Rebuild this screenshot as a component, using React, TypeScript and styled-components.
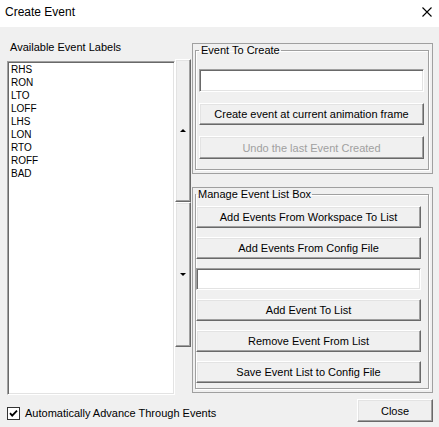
import styled, { createGlobalStyle, css } from 'styled-components';

const EVENT_LABELS = ['RHS', 'RON', 'LTO', 'LOFF', 'LHS', 'LON', 'RTO', 'ROFF', 'BAD'];

const GlobalStyle = createGlobalStyle`
  html, body {
    margin: 0;
    padding: 0;
    background: #f0f0f0;
  }
  body {
    font-family: "Liberation Sans", Arial, sans-serif;
    font-size: 11px;
    color: #000;
  }
`;

function App() {
  return (
    <Window>
      <GlobalStyle />
      <TitleBar>
        <Title>Create Event</Title>
        <svg width="10" height="10" viewBox="0 0 10 10">
          <path d="M0.5 0.5 L9.5 9.5 M9.5 0.5 L0.5 9.5" stroke="#000" strokeWidth="1.1" />
        </svg>
      </TitleBar>
      <Main>
        <LeftCol>
          <Caption>Available Event Labels</Caption>
          <ListBox>
            {EVENT_LABELS.map((label) => (
              <ListItem key={label}>{label}</ListItem>
            ))}
          </ListBox>
        </LeftCol>
        <ScrollCol>
          <ArrowButton $height={143}>
            <Arrow $dir="up" />
          </ArrowButton>
          <ArrowButton $height={145}>
            <Arrow $dir="down" />
          </ArrowButton>
        </ScrollCol>
        <RightCol>
          <Panel $height={131}>
            <GroupBox $pad="12px 4px 10px 3px" $gap={11}>
              <Legend>Event To Create</Legend>
              <TextBox $height={23} />
              <Button $height={23}>Create event at current animation frame</Button>
              <Button $height={23} disabled>Undo the last Event Created</Button>
            </GroupBox>
          </Panel>
          <Panel $height={206}>
            <GroupBox $pad="5px 7px 5px 0" $gap={9}>
              <Legend>Manage Event List Box</Legend>
              <Button $height={22}>Add Events From Workspace To List</Button>
              <Button $height={22}>Add Events From Config File</Button>
              <TextBox $height={22} />
              <Button $height={22}>Add Event To List</Button>
              <Button $height={22}>Remove Event From List</Button>
              <Button $height={22}>Save Event List to Config File</Button>
            </GroupBox>
          </Panel>
        </RightCol>
      </Main>
      <Footer>
        <CheckRow>
          <svg width="13" height="13" viewBox="0 0 13 13">
            <rect x="0.5" y="0.5" width="12" height="12" fill="#fff" stroke="#333" />
            <path d="M3 6.2 L5.2 8.6 L10 3.6" fill="none" stroke="#000" strokeWidth="1.8" />
          </svg>
          <span>Automatically Advance Through Events</span>
        </CheckRow>
        <CloseButton>Close</CloseButton>
      </Footer>
    </Window>
  );
}

export default App;

const raised = css`
  box-sizing: border-box;
  background: #f0f0f0;
  border: 1px solid;
  border-color: #fff #696969 #696969 #fff;
  box-shadow: inset -1px -1px 0 #a0a0a0, inset 1px 1px 0 #e3e3e3;
`;

const sunken = css`
  box-sizing: border-box;
  background: #fff;
  border: 1px solid;
  border-color: #a0a0a0 #fff #fff #a0a0a0;
  box-shadow: inset 1px 1px 0 #696969, inset -1px -1px 0 #e3e3e3;
`;

const Window = styled.div`
  width: 439px;
  height: 427px;
  background: #f0f0f0;
  overflow: hidden;
`;

const TitleBar = styled.div`
  display: flex;
  align-items: center;
  justify-content: space-between;
  height: 27px;
  padding: 0 7px 3px 5px;
  box-sizing: border-box;
  background: #fff;
`;

const Title = styled.span`
  font-size: 12px;
`;

const Main = styled.div`
  display: flex;
  height: 368px;
  padding: 0 6px 0 7px;
`;

const LeftCol = styled.div`
  display: flex;
  flex-direction: column;
  width: 168px;
  padding-top: 14px;
`;

const Caption = styled.div`
  line-height: 13px;
  padding-left: 3px;
  margin-bottom: 7px;
`;

const ListBox = styled.div`
  ${sunken}
  flex: 1;
  padding: 1px 3px;
`;

const ListItem = styled.div`
  font-size: 10px;
  line-height: 13px;
`;

const ScrollCol = styled.div`
  display: flex;
  flex-direction: column;
  width: 16px;
  margin-top: 32px;
`;

const ArrowButton = styled.div<{ $height: number }>`
  ${raised}
  display: flex;
  align-items: center;
  justify-content: center;
  height: ${(p) => p.$height}px;
`;

const Arrow = styled.span<{ $dir: 'up' | 'down' }>`
  width: 0;
  height: 0;
  border-left: 3px solid transparent;
  border-right: 3px solid transparent;
  ${(p) => (p.$dir === 'up' ? 'border-bottom: 3px solid #000;' : 'border-top: 3px solid #000;')}
`;

const RightCol = styled.div`
  display: flex;
  flex-direction: column;
  gap: 13px;
  width: 241px;
  margin-left: 1px;
  padding-top: 16px;
`;

const Panel = styled.div<{ $height: number }>`
  display: flex;
  box-sizing: border-box;
  height: ${(p) => p.$height}px;
  padding: 0 3px 3px 2px;
  border: 1px solid #a0a0a0;
`;

const GroupBox = styled.fieldset<{ $pad: string; $gap: number }>`
  flex: 1;
  display: flex;
  flex-direction: column;
  gap: ${(p) => p.$gap}px;
  min-width: 0;
  margin: 0;
  padding: ${(p) => p.$pad};
  border: 1px solid #a0a0a0;
  box-shadow: 1px 1px 0 #fff, inset 1px 1px 0 #fff;
`;

const Legend = styled.legend`
  padding: 0 1px 0 2px;
  line-height: 13px;
`;

const TextBox = styled.input<{ $height: number }>`
  ${sunken}
  height: ${(p) => p.$height}px;
  margin: 0;
  padding: 0 3px;
  font: inherit;
  outline: none;
`;

const Button = styled.button<{ $height: number }>`
  ${raised}
  height: ${(p) => p.$height}px;
  margin: 0;
  padding: 0;
  font-family: inherit;
  font-size: 11px;
  color: #000;
  &:disabled {
    color: #a0a0a0;
  }
`;

const Footer = styled.div`
  display: flex;
  justify-content: space-between;
  align-items: flex-start;
  height: 32px;
  padding: 0 6px 0 7px;
`;

const CheckRow = styled.label`
  display: flex;
  align-items: center;
  gap: 5px;
  margin-top: 12px;
  line-height: 13px;
`;

const CloseButton = styled.button`
  ${raised}
  width: 76px;
  height: 23px;
  margin-top: 4px;
  padding: 0;
  font-family: inherit;
  font-size: 11px;
  color: #000;
`;
